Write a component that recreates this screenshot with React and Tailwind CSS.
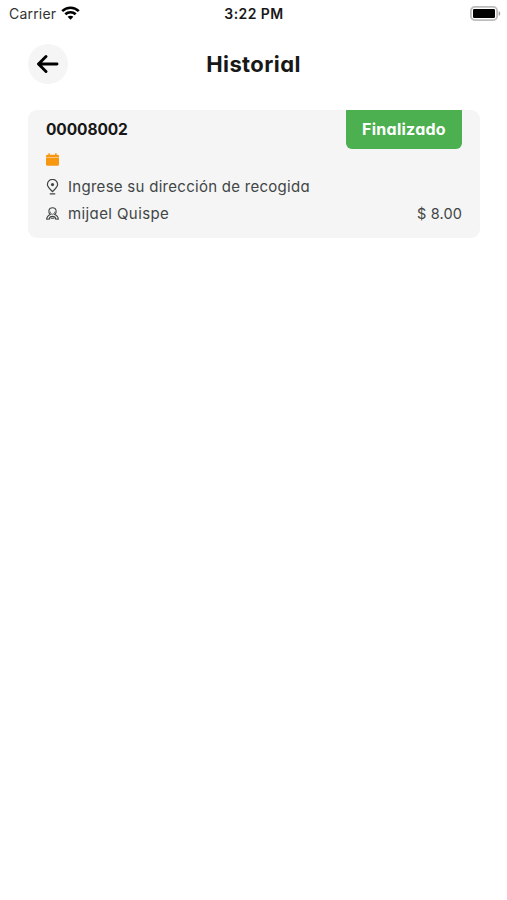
const WifiIcon = () => (
  <svg className="mb-[1px] ml-[5px] h-[14px] w-[19px]" viewBox="0 0 19 14" fill="none" stroke="#000" strokeWidth="2.6">
    <path d="M1.2 5.2C5.8.6 13.2.6 17.8 5.2" />
    <path d="M4.3 8.3c2.9-2.8 7.5-2.8 10.4 0" />
    <path d="M9.5 13.7 6.6 10.8c1.6-1.5 4.2-1.5 5.8 0Z" fill="#000" stroke="none" />
  </svg>
);

const BatteryIcon = () => (
  <svg className="h-[15px] w-[31px]" viewBox="0 0 31 15">
    <rect x=".9" y=".9" width="26.2" height="13.2" rx="3.8" fill="#fff" stroke="#bcbcbc" strokeWidth="1.8" />
    <rect x="3" y="3" width="22" height="9" rx="1.2" fill="#000" />
    <path d="M28.7 5.2c2 .7 2 3.9 0 4.6Z" fill="#999" />
  </svg>
);

const BackIcon = () => (
  <svg className="h-[20px] w-[22px]" viewBox="0 0 22 20" fill="none" stroke="#000" strokeWidth="2.9" strokeLinecap="round" strokeLinejoin="round">
    <path d="M20 10H2M9 2.5 1.5 10 9 17.5" />
  </svg>
);

const CalendarIcon = () => (
  <svg className="h-[13px] w-[13px]" viewBox="0 0 13 13" fill="#f7960f">
    <path d="M0 4.4V3.2Q0 1.8 1.4 1.8h1V.7q0-.7.7-.7t.7.7v1.1h5.4V.7q0-.7.7-.7t.7.7v1.1h1Q13 1.8 13 3.2v1.2Z" />
    <path d="M0 5.1h13v6.2q0 1.5-1.5 1.5h-10Q0 12.8 0 11.3Z" />
  </svg>
);

const PinIcon = () => (
  <svg className="h-[16px] w-[13px]" viewBox="0 0 13 16" fill="none" stroke="#414545" strokeWidth="1.2" strokeLinecap="round">
    <path d="M6.5 12.6C4.1 10 1.4 8 1.4 5.5a5.1 5.1 0 0 1 10.2 0c0 2.5-2.7 4.5-5.1 7.1Z" />
    <circle cx="6.5" cy="5.6" r="1.6" fill="#414545" stroke="none" />
    <path d="M4.2 14.8h4.6" />
  </svg>
);

const PersonIcon = () => (
  <svg className="h-[13px] w-[13px]" viewBox="0 0 13 13" fill="none" stroke="#414545" strokeWidth="1.1" strokeLinecap="round" strokeLinejoin="round">
    <path d="M4.1 7.3C2.8 6.4 2.7 4.8 2.9 3.5 3.3 1.6 4.8.7 6.5.7s3.2.9 3.6 2.8c.2 1.3.1 2.9-1.2 3.8" />
    <path d="M4.3 5C4.5 6.3 5.3 7.3 6.5 7.3S8.5 6.3 8.7 5" strokeWidth=".8" />
    <path d="M4.3 7.4C2.3 8.1.9 9.6.6 12.3l2.7-.3M8.7 7.4c2 .7 3.4 2.2 3.7 4.9L9.7 12" />
    <path d="M3.3 12c.2-1.8 1.5-2.6 3.2-2.6s3 .8 3.2 2.6M5.2 11.3h2.6" />
  </svg>
);

export default function App() {
  return (
    <div className="min-h-[900px] w-full bg-white font-['Inter','Liberation_Sans',sans-serif] text-[#181818]">
      <header className="grid h-[27px] grid-cols-3 items-center pl-[9px] pr-[6px]">
        <div className="flex items-center">
          <span className="text-[14px] leading-[27px] tracking-[0.2px] text-[#333]">Carrier</span>
          <WifiIcon />
        </div>
        <div className="-ml-[2px] text-center text-[14px] font-semibold leading-[27px] tracking-[0.45px]">3:22 PM</div>
        <div className="flex justify-end">
          <BatteryIcon />
        </div>
      </header>

      <div className="mt-[17px] grid h-[40px] grid-cols-[40px_1fr_40px] items-center px-[28px]">
        <button className="flex h-[40px] w-[40px] items-center justify-center rounded-full bg-[#f5f5f5]" aria-label="Volver">
          <BackIcon />
        </button>
        <h1 className="pb-[1px] text-center text-[22px] font-bold leading-[38px] tracking-[0.4px] [font-feature-settings:'cv11']">Historial</h1>
      </div>

      <section className="ml-[28px] mt-[26px] h-[128px] w-[452px] rounded-[9px] bg-[#f5f5f5] px-[18px] [font-feature-settings:'cv11']">
        <div className="flex h-[39px] items-center justify-between">
          <span className="text-[15.5px] font-bold tracking-[-0.1px]">00008002</span>
          <span className="flex h-[39px] w-[116px] items-center justify-center rounded-b-[6px] bg-[#4caf50] pb-[2px] text-[16px] font-bold tracking-[0.25px] text-white">
            Finalizado
          </span>
        </div>
        <div className="mt-[4px] flex h-[13px] items-center">
          <CalendarIcon />
        </div>
        <div className="mt-[7px] flex h-[27px] items-center text-[#414545]">
          <PinIcon />
          <span className="ml-[9px] pt-[1px] text-[15px] tracking-[0.28px]">Ingrese su dirección de recogida</span>
        </div>
        <div className="flex h-[26px] items-center text-[#414545]">
          <PersonIcon />
          <span className="ml-[9px] pt-[2px] text-[15px] tracking-[0.4px]">mijael Quispe</span>
          <span className="ml-auto pt-[1px] text-[14.5px] tracking-[0.15px]">$ 8.00</span>
        </div>
      </section>
    </div>
  );
}
